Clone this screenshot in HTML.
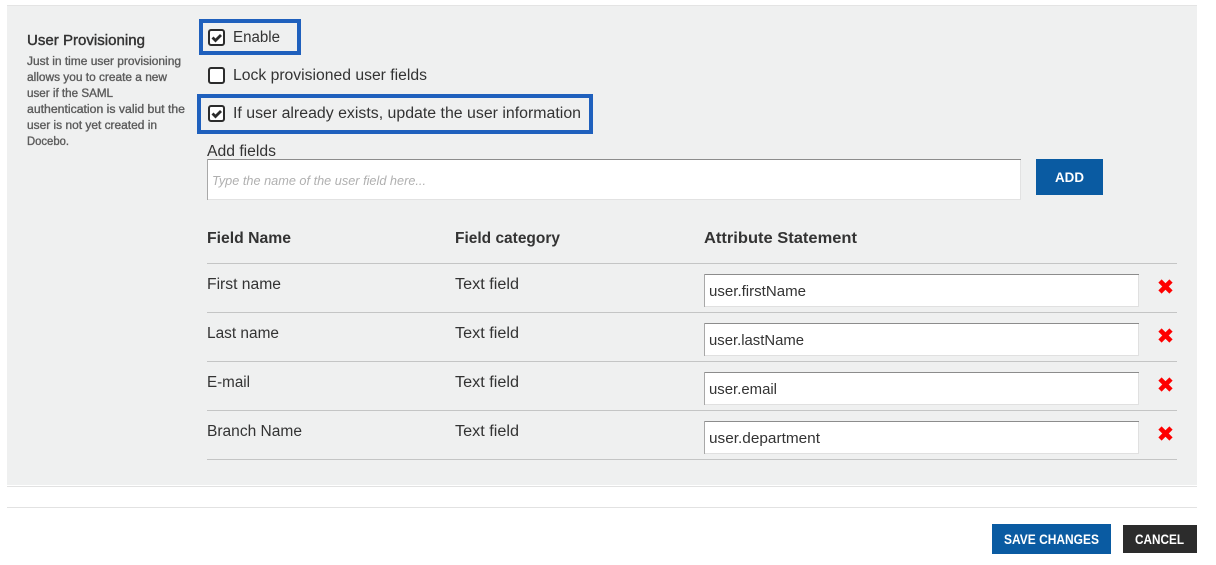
<!DOCTYPE html>
<html><head><meta charset="utf-8"><style>
html,body{margin:0;padding:0;background:#fff;width:1216px;height:565px;overflow:hidden}
svg{display:block}
text{font-family:"Liberation Sans",sans-serif;fill:#333;font-size:15.5px}
.d{font-size:11.5px;fill:#5c5c5c;stroke:#5c5c5c;stroke-width:.35}
.h{font-size:15.5px;font-weight:bold;fill:#333}
.w{fill:#fff;font-weight:bold;font-size:13.5px}
</style></head><body>
<svg width="1216" height="565" viewBox="0 0 1216 565" xmlns="http://www.w3.org/2000/svg">
<rect width="1216" height="565" fill="#fff"/>
<rect x="7" y="5" width="1190" height="1" fill="#e4e4e4"/>
<rect x="7" y="6" width="1190" height="479" fill="#eff0f0"/>
<rect x="7" y="486" width="1190" height="1" fill="#e2e2e2"/>
<rect x="7" y="507" width="1190" height="1" fill="#e2e2e2"/>

<text x="27" y="45" textLength="118" lengthAdjust="spacingAndGlyphs" style="font-size:15px;stroke:#333;stroke-width:.4">User Provisioning</text>
<text class="d" x="27" y="65" textLength="154" lengthAdjust="spacingAndGlyphs">Just in time user provisioning</text>
<text class="d" x="27" y="81" textLength="140" lengthAdjust="spacingAndGlyphs">allows you to create a new</text>
<text class="d" x="27" y="97" textLength="86" lengthAdjust="spacingAndGlyphs">user if the SAML</text>
<text class="d" x="27" y="113" textLength="158" lengthAdjust="spacingAndGlyphs">authentication is valid but the</text>
<text class="d" x="27" y="129" textLength="130" lengthAdjust="spacingAndGlyphs">user is not yet created in</text>
<text class="d" x="27" y="145" textLength="42" lengthAdjust="spacingAndGlyphs">Docebo.</text>

<rect x="201" y="21" width="98" height="32" fill="none" stroke="#1f60bd" stroke-width="4"/>
<rect x="199" y="96" width="392" height="36" fill="none" stroke="#1f60bd" stroke-width="4"/>

<rect x="209" y="30" width="15" height="15" rx="2" fill="#fff" stroke="#2c2c2c" stroke-width="2"/>
<path d="M212.5 37.5l3 3 5.5-5.5" fill="none" stroke="#2c2c2c" stroke-width="2.8"/>
<rect x="209" y="68" width="15" height="15" rx="2" fill="#fff" stroke="#2c2c2c" stroke-width="2"/>
<rect x="209" y="106" width="15" height="15" rx="2" fill="#fff" stroke="#2c2c2c" stroke-width="2"/>
<path d="M212.5 113.5l3 3 5.5-5.5" fill="none" stroke="#2c2c2c" stroke-width="2.8"/>

<text x="233" y="42" textLength="47" lengthAdjust="spacingAndGlyphs">Enable</text>
<text x="233" y="80" textLength="194" lengthAdjust="spacingAndGlyphs">Lock provisioned user fields</text>
<text x="233" y="118" textLength="348" lengthAdjust="spacingAndGlyphs">If user already exists, update the user information</text>
<text x="207" y="156" textLength="69" lengthAdjust="spacingAndGlyphs">Add fields</text>

<rect x="207" y="159" width="814" height="41" fill="#e2e2e2"/>
<rect x="208" y="160" width="812" height="39" fill="#fff"/>
<rect x="207" y="159" width="814" height="1" fill="#8c8c8c"/>
<rect x="207" y="159" width="1" height="41" fill="#a8a8a8"/>
<text x="212" y="185" textLength="214" lengthAdjust="spacingAndGlyphs" style="font-size:12.5px;font-style:italic;fill:#b0b0b0">Type the name of the user field here...</text>

<rect x="1036" y="159" width="67" height="36" fill="#0a5ba2"/>
<text class="w" x="1055" y="182" textLength="29" lengthAdjust="spacingAndGlyphs">ADD</text>

<text class="h" x="207" y="243" textLength="84" lengthAdjust="spacingAndGlyphs">Field Name</text>
<text class="h" x="455" y="243" textLength="105" lengthAdjust="spacingAndGlyphs">Field category</text>
<text class="h" x="704" y="243" textLength="153" lengthAdjust="spacingAndGlyphs">Attribute Statement</text>

<g fill="#c4c5c5">
<rect x="207" y="263" width="970" height="1"/>
<rect x="207" y="312" width="970" height="1"/>
<rect x="207" y="361" width="970" height="1"/>
<rect x="207" y="410" width="970" height="1"/>
<rect x="207" y="459" width="970" height="1"/>
</g>

<text x="207" y="289" textLength="74" lengthAdjust="spacingAndGlyphs">First name</text>
<text x="455" y="289" textLength="64" lengthAdjust="spacingAndGlyphs">Text field</text>
<text x="207" y="338" textLength="72" lengthAdjust="spacingAndGlyphs">Last name</text>
<text x="455" y="338" textLength="64" lengthAdjust="spacingAndGlyphs">Text field</text>
<text x="207" y="387" textLength="43" lengthAdjust="spacingAndGlyphs">E-mail</text>
<text x="455" y="387" textLength="64" lengthAdjust="spacingAndGlyphs">Text field</text>
<text x="207" y="436" textLength="95" lengthAdjust="spacingAndGlyphs">Branch Name</text>
<text x="455" y="436" textLength="64" lengthAdjust="spacingAndGlyphs">Text field</text>

<g>
<rect x="704" y="274" width="435" height="33" fill="#e0e0e0"/><rect x="705" y="275" width="433" height="31" fill="#fff"/><rect x="704" y="274" width="435" height="1" fill="#8c8c8c"/><rect x="704" y="274" width="1" height="33" fill="#a8a8a8"/>
<rect x="704" y="323" width="435" height="33" fill="#e0e0e0"/><rect x="705" y="324" width="433" height="31" fill="#fff"/><rect x="704" y="323" width="435" height="1" fill="#8c8c8c"/><rect x="704" y="323" width="1" height="33" fill="#a8a8a8"/>
<rect x="704" y="372" width="435" height="33" fill="#e0e0e0"/><rect x="705" y="373" width="433" height="31" fill="#fff"/><rect x="704" y="372" width="435" height="1" fill="#8c8c8c"/><rect x="704" y="372" width="1" height="33" fill="#a8a8a8"/>
<rect x="704" y="421" width="435" height="33" fill="#e0e0e0"/><rect x="705" y="422" width="433" height="31" fill="#fff"/><rect x="704" y="421" width="435" height="1" fill="#8c8c8c"/><rect x="704" y="421" width="1" height="33" fill="#a8a8a8"/>
</g>
<text x="709" y="296" textLength="97" lengthAdjust="spacingAndGlyphs" style="font-size:14.5px">user.firstName</text>
<text x="709" y="345" textLength="95" lengthAdjust="spacingAndGlyphs" style="font-size:14.5px">user.lastName</text>
<text x="709" y="394" textLength="68" lengthAdjust="spacingAndGlyphs" style="font-size:14.5px">user.email</text>
<text x="709" y="443" textLength="111" lengthAdjust="spacingAndGlyphs" style="font-size:14.5px">user.department</text>

<g stroke="#fe0000" stroke-width="4.6" fill="none">
<path d="M1160 281l11 11M1171 281l-11 11"/>
<path d="M1160 330l11 11M1171 330l-11 11"/>
<path d="M1160 379l11 11M1171 379l-11 11"/>
<path d="M1160 428l11 11M1171 428l-11 11"/>
</g>

<rect x="992" y="524" width="119" height="30" fill="#0a5ba2"/>
<text class="w" x="1004" y="544" textLength="95" lengthAdjust="spacingAndGlyphs">SAVE CHANGES</text>
<rect x="1123" y="525" width="74" height="28" fill="#2c2c2c"/>
<text class="w" x="1135" y="544" textLength="49" lengthAdjust="spacingAndGlyphs">CANCEL</text>
</svg>
</body></html>
